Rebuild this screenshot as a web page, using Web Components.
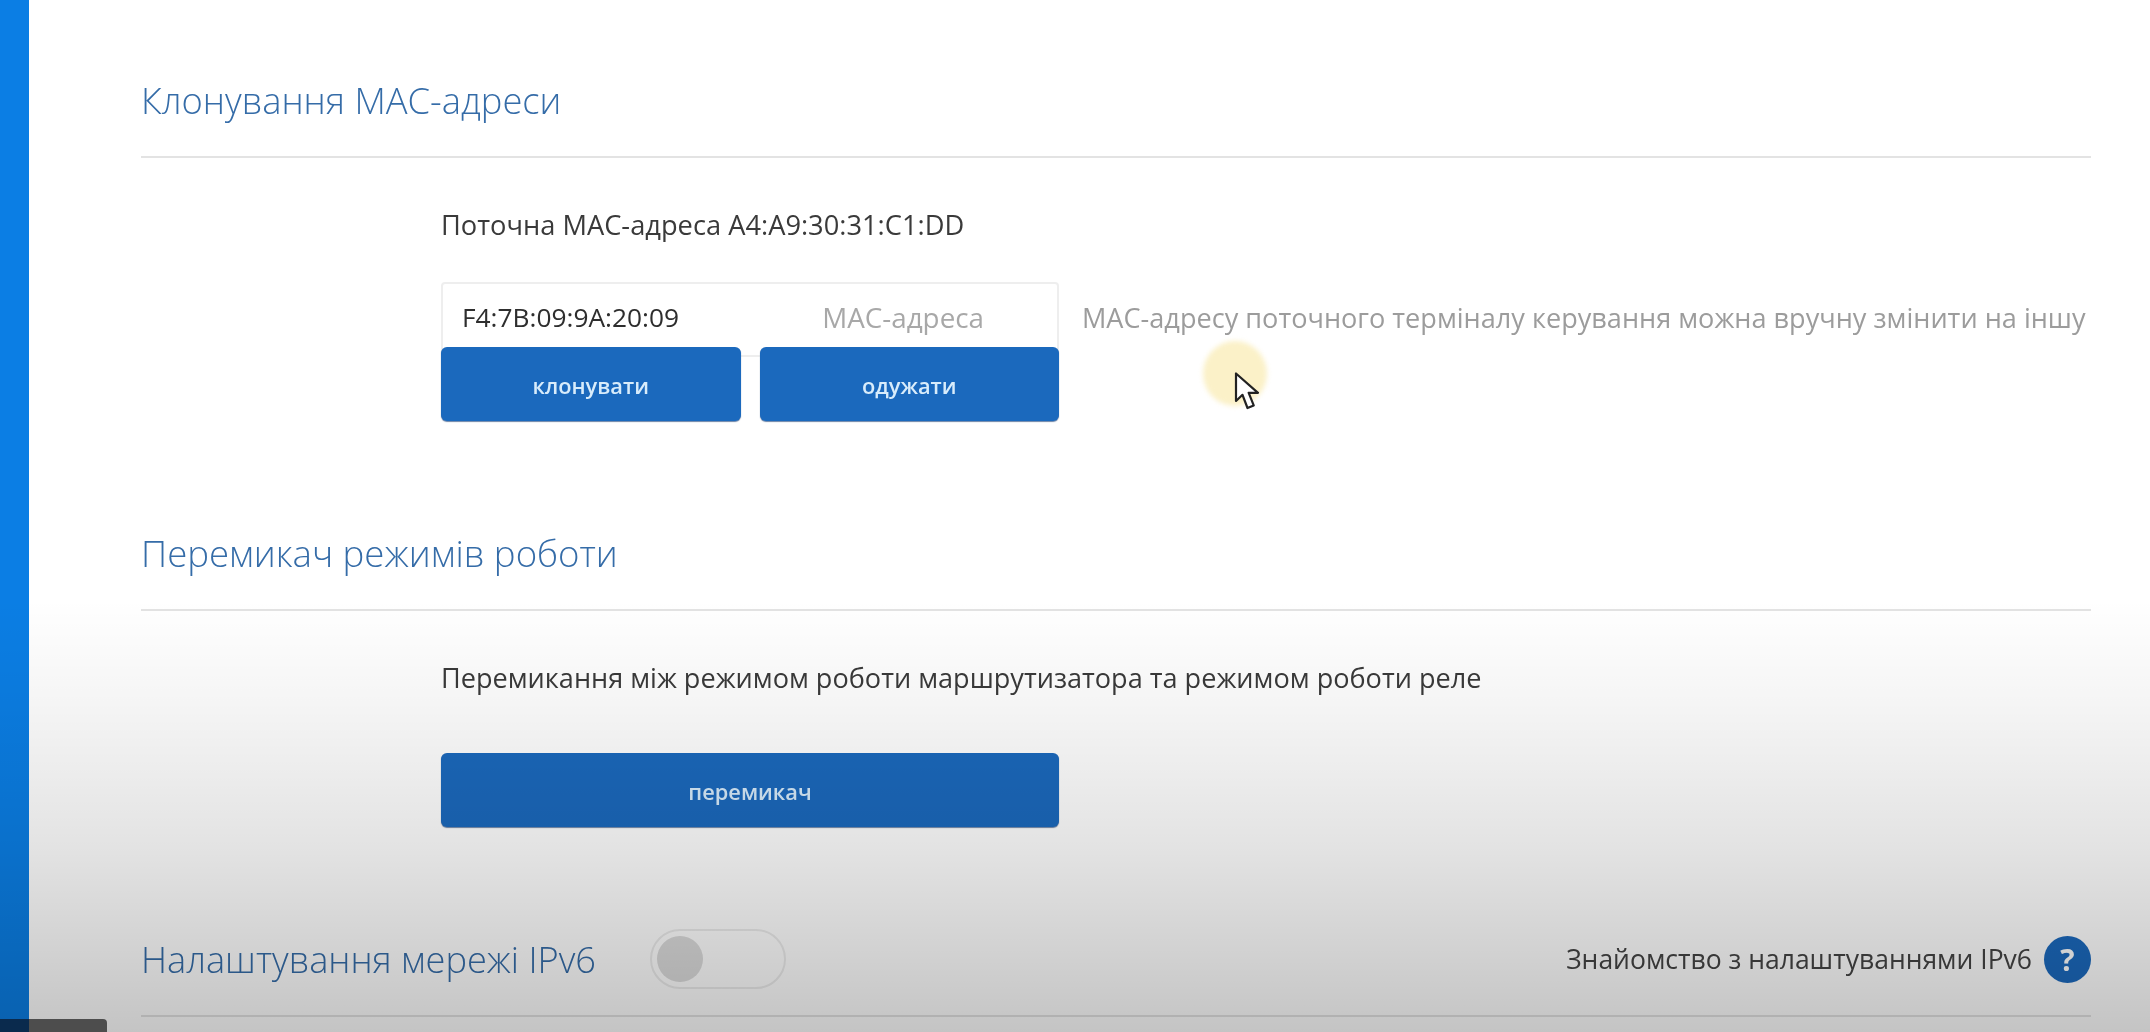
<!DOCTYPE html>
<html lang="uk"><head><meta charset="utf-8"><title>MAC</title>
<style>html,body{margin:0;height:1032px;overflow:hidden;background:#fff}</style></head>
<body>
<router-page>
  <set-section heading="Клонування МАС-адреси">
    <body-line style="font-size:27.25px">Поточна МАС-адреса A4:A9:30:31:C1:DD</body-line>
    <mac-row></mac-row>
  </set-section>
  <set-section heading="Перемикач режимів роботи" style="--h:36.6px">
    <body-line>Перемикання між режимом роботи маршрутизатора та режимом роботи реле</body-line>
    <blue-button style="width:618px;margin-top:60px">перемикач</blue-button>
  </set-section>
  <set-section heading="Налаштування мережі IPv6" style="--h:36.2px">
    <toggle-switch slot="after"></toggle-switch>
    <help-link slot="end">Знайомство з налаштуваннями IPv6</help-link>
  </set-section>
</router-page>
<script>
const F='"Open Sans","Noto Sans",sans-serif';
function def(name,css,html){
  customElements.define(name,class extends HTMLElement{
    connectedCallback(){ if(this.shadowRoot)return;
      const r=this.attachShadow({mode:'open'});
      r.innerHTML='<style>'+css+'</style>'+(typeof html==='function'?html(this):html);
    }
  });
}
def('router-page',`
 :host{display:flex;position:relative;width:2150px;height:1032px;overflow:hidden;font-family:${F};background:#fff}
 .bar{width:29px;flex:none;background:#0b7ee4}
 main{flex:1;min-width:0;padding:78px 59px 0 112px;display:flex;flex-direction:column;gap:110px;filter:blur(.45px)}
 .shade{position:absolute;inset:0;pointer-events:none;background:linear-gradient(rgba(0,0,0,0) 0,rgba(0,0,0,0) 58%,rgba(0,0,0,.04) 68%,rgba(0,0,0,.11) 82%,rgba(0,0,0,.23) 100%)}
 .chip{position:absolute;left:0;bottom:0;width:107px;height:13px;background:#4d4d4d;border-top-right-radius:4px}
 .chip::before{content:"";position:absolute;left:0;top:0;bottom:0;width:29px;background:#0a2a4d}
 .halo{position:absolute;left:1203px;top:341px;width:64px;height:65px;border-radius:50%;background:#fbf1c8;filter:blur(2.5px)}
 svg{position:absolute;left:1234px;top:372px}
`,`<div class="bar"></div><main><slot></slot></main><div class="halo"></div>
<svg width="26" height="39" viewBox="0 0 26 39"><path d="M2 1.5V29l6.5-6.2L13.5 36l6.2-2.6-5-12.6H24Z" fill="#fff" stroke="#222" stroke-width="2.2" stroke-linejoin="round"/></svg>
<div class="shade"></div><div class="chip"></div>`);
def('set-section',`
 :host{display:block}
 header{display:flex;align-items:center;height:44px;padding-bottom:34px;border-bottom:2px solid #e3e3e3;box-sizing:content-box;margin-bottom:52px}
 h2{margin:0;font:300 var(--h,36.3px)/44px ${F};color:#356ca8;white-space:nowrap}
 .end{margin-left:auto}
 .b{padding-left:300px}
`,h=>`<header><h2>${h.getAttribute('heading')}</h2><slot name="after"></slot><div class="end"><slot name="end"></slot></div></header><div class="b"><slot></slot></div>`);
def('body-line',`:host{display:block;font:400 27.1px/30px ${F};color:#3a3a3a;white-space:nowrap}`,`<slot></slot>`);
def('blue-button',`
 :host{display:flex;align-items:center;justify-content:center;height:74px;box-sizing:border-box;padding-top:3px;background:#1b69bd;border-radius:6px;
 box-shadow:0 1px 1px rgba(10,50,110,.6);color:#d8ecfb;font:600 21.8px/1 ${F};flex:none}
`,`<slot></slot>`);
def('mac-row',`
 :host{display:block;margin-top:42px}
 .top{display:flex;align-items:center;gap:23px}
 .field{width:618px;height:75px;box-sizing:border-box;border:2px solid #eeeeee;border-radius:4px;background:#fff;display:flex;align-items:center;justify-content:space-between;padding:0 73px 5px 19px;font:400 27.8px/30px ${F};color:#2e2e2e}
 .v{font-size:26.3px}
 .ph{color:#a8a8a8}
 .hint{color:#9c9c9c;font:400 27.1px/30px ${F};white-space:nowrap;margin-bottom:4px}
 .btns{display:flex;gap:19px;width:618px;margin-top:-10px;position:relative}
 blue-button{flex:1}
`,`<div class="top"><div class="field"><span class="v">F4:7B:09:9A:20:09</span><span class="ph">МАС-адреса</span></div><div class="hint">МАС-адресу поточного терміналу керування можна вручну змінити на іншу</div></div>
<div class="btns"><blue-button>клонувати</blue-button><blue-button>одужати</blue-button></div>`);
def('toggle-switch',`
 :host{display:flex;align-items:center;width:136px;height:60px;box-sizing:border-box;margin-left:54px;border:2px solid #ececec;border-radius:30px;padding-left:5px}
 i{display:block;width:46px;height:46px;border-radius:50%;background:#dcdcdc}
`,`<i></i>`);
def('help-link',`
 :host{display:flex;align-items:center;gap:12px;font:400 26.5px/30px ${F};color:#444;white-space:nowrap}
 b{width:47px;height:47px;border-radius:50%;background:#1b69bd;color:#fff;font:700 30px/47px ${F};text-align:center}
`,`<span><slot></slot></span><b>?</b>`);
</script>
</body></html>
